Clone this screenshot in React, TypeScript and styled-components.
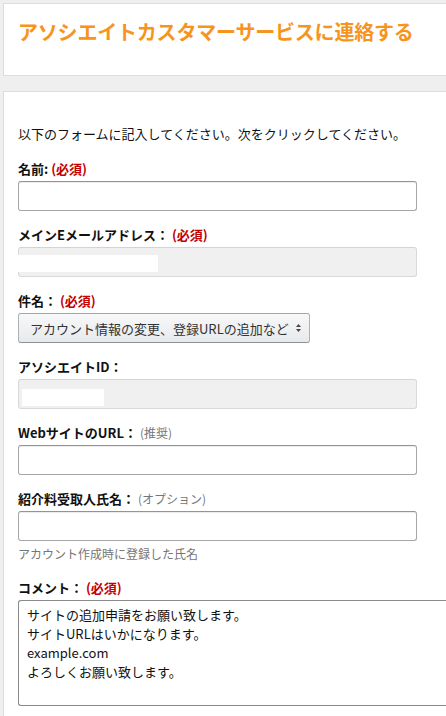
import React from "react";
import styled, { createGlobalStyle } from "styled-components";

const Global = createGlobalStyle`
  html, body {
    margin: 0;
    padding: 0;
    background: #efefef;
    overflow: hidden;
  }
  body {
    font-family: "Noto Sans CJK JP", "Noto Sans", sans-serif;
    color: #111;
  }
`;

const Page = styled.div`
  width: 446px;
  height: 716px;
  overflow: hidden;
  padding: 3px 0 0 3px;
  box-sizing: border-box;
  display: flex;
  flex-direction: column;
  gap: 15px;
`;

const Card = styled.section`
  background: #fff;
  border: 1px solid #dddddd;
  border-right: none;
  width: 460px;
  box-sizing: border-box;
  flex-shrink: 0;
`;

const HeaderCard = styled(Card)`
  height: 73px;
  padding: 15px 0 0 14px;
`;

const Title = styled.h1`
  margin: 0;
  font-size: 20px;
  line-height: 26px;
  font-weight: 700;
  color: #f7941d;
  letter-spacing: -0.2px;
`;

const FormCard = styled(Card)`
  flex: 1;
  padding: 32px 0 0 14px;
`;

const Intro = styled.p`
  margin: 0 0 16px;
  font-size: 13px;
  line-height: 19px;
  color: #111;
`;

const Field = styled.div`
  display: flex;
  flex-direction: column;
  align-items: flex-start;
  margin-bottom: 14px;
`;

const Label = styled.label`
  font-size: 13px;
  line-height: 19px;
  font-weight: 700;
  color: #111;
  margin-bottom: 3px;
`;

const Required = styled.span`
  color: #c40000;
  font-weight: 700;
`;

const Note = styled.span`
  color: #767676;
  font-weight: 400;
  font-size: 12px;
`;

const TextInput = styled.div<{ $disabled?: boolean }>`
  position: relative;
  width: 399px;
  height: 30px;
  box-sizing: border-box;
  border: 1px solid ${(p) => (p.$disabled ? "#d9d9d9" : "#a6a6a6")};
  border-top-color: ${(p) => (p.$disabled ? "#d4d4d4" : "#949494")};
  border-radius: 3px;
  background: ${(p) => (p.$disabled ? "#f0f0f0" : "#fff")};
  box-shadow: ${(p) =>
    p.$disabled ? "none" : "0 1px 0 rgba(255,255,255,.5), 0 1px 0 rgba(0,0,0,.07) inset"};
`;

const Redact = styled.div<{ $left: number; $width: number; $top: number }>`
  position: absolute;
  left: ${(p) => p.$left}px;
  top: ${(p) => p.$top}px;
  width: ${(p) => p.$width}px;
  height: 17px;
  background: #fff;
`;

const Select = styled.div`
  width: 292px;
  height: 30px;
  box-sizing: border-box;
  border: 1px solid #adb1b8;
  border-top-color: #a2a6ac;
  border-bottom-color: #8d9096;
  border-radius: 3px;
  background: linear-gradient(to bottom, #f7f8fa, #e7e9ec);
  display: flex;
  align-items: center;
  padding: 0 7px 0 11px;
  gap: 6px;
  font-size: 13px;
  color: #333;
`;

const SelectText = styled.span`
  flex: 1;
  white-space: nowrap;
  line-height: 19px;
`;

const Hint = styled.div`
  font-size: 12px;
  line-height: 17px;
  color: #767676;
  margin: -10px 0 16px;
`;

const TextArea = styled.div`
  width: 440px;
  height: 106px;
  box-sizing: border-box;
  border: 1px solid #8a8a8a;
  border-right: none;
  border-radius: 3px 0 0 3px;
  background: #fff;
  padding: 4px 0 0 8px;
  font-size: 13px;
  line-height: 19px;
  color: #111;
`;

const Line = styled.div``;

const SelectArrows = () => (
  <svg width="7" height="10" viewBox="0 0 7 10" aria-hidden="true">
    <path d="M3.5 1 L6 4 L1 4 Z" fill="#444" />
    <path d="M3.5 9 L6 6 L1 6 Z" fill="#444" />
  </svg>
);

export default function App() {
  return (
    <>
      <Global />
      <Page>
        <HeaderCard>
          <Title>アソシエイトカスタマーサービスに連絡する</Title>
        </HeaderCard>
        <FormCard>
          <Intro>以下のフォームに記入してください。次をクリックしてください。</Intro>

          <Field>
            <Label>
              名前: <Required>(必須)</Required>
            </Label>
            <TextInput />
          </Field>

          <Field>
            <Label>
              メインEメールアドレス： <Required>(必須)</Required>
            </Label>
            <TextInput $disabled>
              <Redact $left={-1} $top={7} $width={140} />
            </TextInput>
          </Field>

          <Field>
            <Label>
              件名： <Required>(必須)</Required>
            </Label>
            <Select>
              <SelectText>アカウント情報の変更、登録URLの追加など</SelectText>
              <SelectArrows />
            </Select>
          </Field>

          <Field>
            <Label>アソシエイトID：</Label>
            <TextInput $disabled>
              <Redact $left={3} $top={9} $width={82} />
            </TextInput>
          </Field>

          <Field>
            <Label>
              WebサイトのURL： <Note>(推奨)</Note>
            </Label>
            <TextInput />
          </Field>

          <Field>
            <Label>
              紹介料受取人氏名： <Note>(オプション)</Note>
            </Label>
            <TextInput />
          </Field>

          <Hint>アカウント作成時に登録した氏名</Hint>

          <Field>
            <Label>
              コメント： <Required>(必須)</Required>
            </Label>
            <TextArea>
              <Line>サイトの追加申請をお願い致します。</Line>
              <Line>サイトURLはいかになります。</Line>
              <Line>example.com</Line>
              <Line>よろしくお願い致します。</Line>
            </TextArea>
          </Field>
        </FormCard>
      </Page>
    </>
  );
}
